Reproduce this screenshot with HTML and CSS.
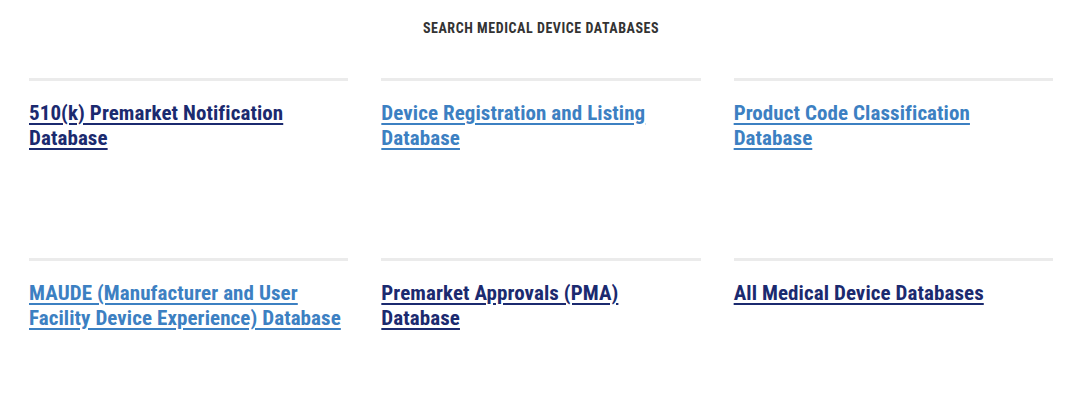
FILE: index.html
```html
<!DOCTYPE html>
<html>
<head>
	<meta charset="utf-8">
	<title>Search Medical Device Databases</title>
	<link rel="stylesheet" href="styles.css">
</head>
<body>
	<div class="box">
		<h2 class="title">SEARCH MEDICAL DEVICE DATABASES</h2>
		<ul class="grid">
			<li><a class="dark" href="javascript:">510(k) Premarket Notification Database</a></li>
			<li><a class="light" href="javascript:">Device Registration and Listing Database</a></li>
			<li><a class="light" href="javascript:">Product Code Classification Database</a></li>
			<li><a class="light" href="javascript:">MAUDE (Manufacturer and User Facility Device Experience) Database</a></li>
			<li><a class="dark" href="javascript:">Premarket Approvals (PMA) Database</a></li>
			<li><a class="dark" href="javascript:">All Medical Device Databases</a></li>
		</ul>
	</div>
</body>
</html>
```

FILE: styles.css
```css
*{
	margin: 0;
	padding: 0;
	box-sizing: border-box;
}
body{
	background: #fff;
	font-family: "Roboto Condensed", Roboto, "Liberation Sans", sans-serif;
}
.box{
	width: 1024px;
	margin-left: 29px;
}
.title{
	padding-top: 20px;
	text-align: center;
	font-size: 14px;
	line-height: 17px;
	font-weight: bold;
	letter-spacing: .55px;
	color: #333;
}
.grid{
	display: grid;
	grid-template-columns: repeat(3, 1fr);
	column-gap: 33px;
	margin-top: 41px;
	list-style: none;
}
.grid li{
	height: 180px;
	padding-top: 20px;
	padding-right: 4px;
	border-top: 3px solid #ebebeb;
	font-size: 21px;
	line-height: 25px;
	font-weight: bold;
	letter-spacing: .08px;
}
.grid li:nth-child(n+4){
	height: 120px;
}
.grid a{
	text-decoration: underline;
	text-underline-offset: 3px;
	text-decoration-thickness: 2px;
}
.dark{
	color: #1b2a6f;
}
.light{
	color: #3c80c2;
}
```
